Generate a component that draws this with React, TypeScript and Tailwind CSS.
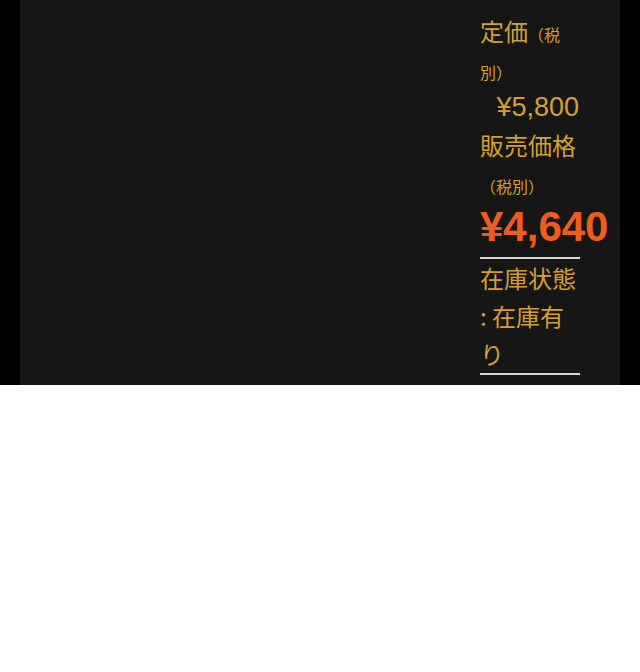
import React from "react";

const cjk = { fontFamily: '"Noto Sans CJK JP", sans-serif' };
const num = { fontFamily: '"Liberation Sans", Arial, sans-serif' };

export default function App() {
  return (
    <div className="bg-white min-h-[672px]" style={cjk}>
      <div className="h-[385px] bg-black px-[20px] overflow-hidden">
        <div className="h-full bg-[#161616] flex justify-end pr-[40px]">
          {/* price box */}
          <div className="w-[100px] pt-[12px] text-[#d49f35]">
            <dl>
              <dt className="text-[24px] leading-[38px]">
                定価<span className="text-[16px] leading-none">（税別）</span>
              </dt>
              <dd className="text-[27px] leading-[38px] text-right pr-[1px]" style={num}>
                ¥5,800
              </dd>
              <dt className="text-[24px] leading-[38px]">
                販売価格
                <br />
                <span className="text-[16px] leading-none">（税別）</span>
              </dt>
              <dd
                className="text-[42px] leading-[50px] font-bold text-right text-[#ee5d1d] whitespace-nowrap mb-[5px]"
                style={num}
              >
                ¥4,640
              </dd>
            </dl>
            <p className="border-y-2 border-[#d8d8d8] text-[24px] leading-[38px]">
              在庫状態 : 在庫有り
            </p>
          </div>
        </div>
      </div>
    </div>
  );
}
